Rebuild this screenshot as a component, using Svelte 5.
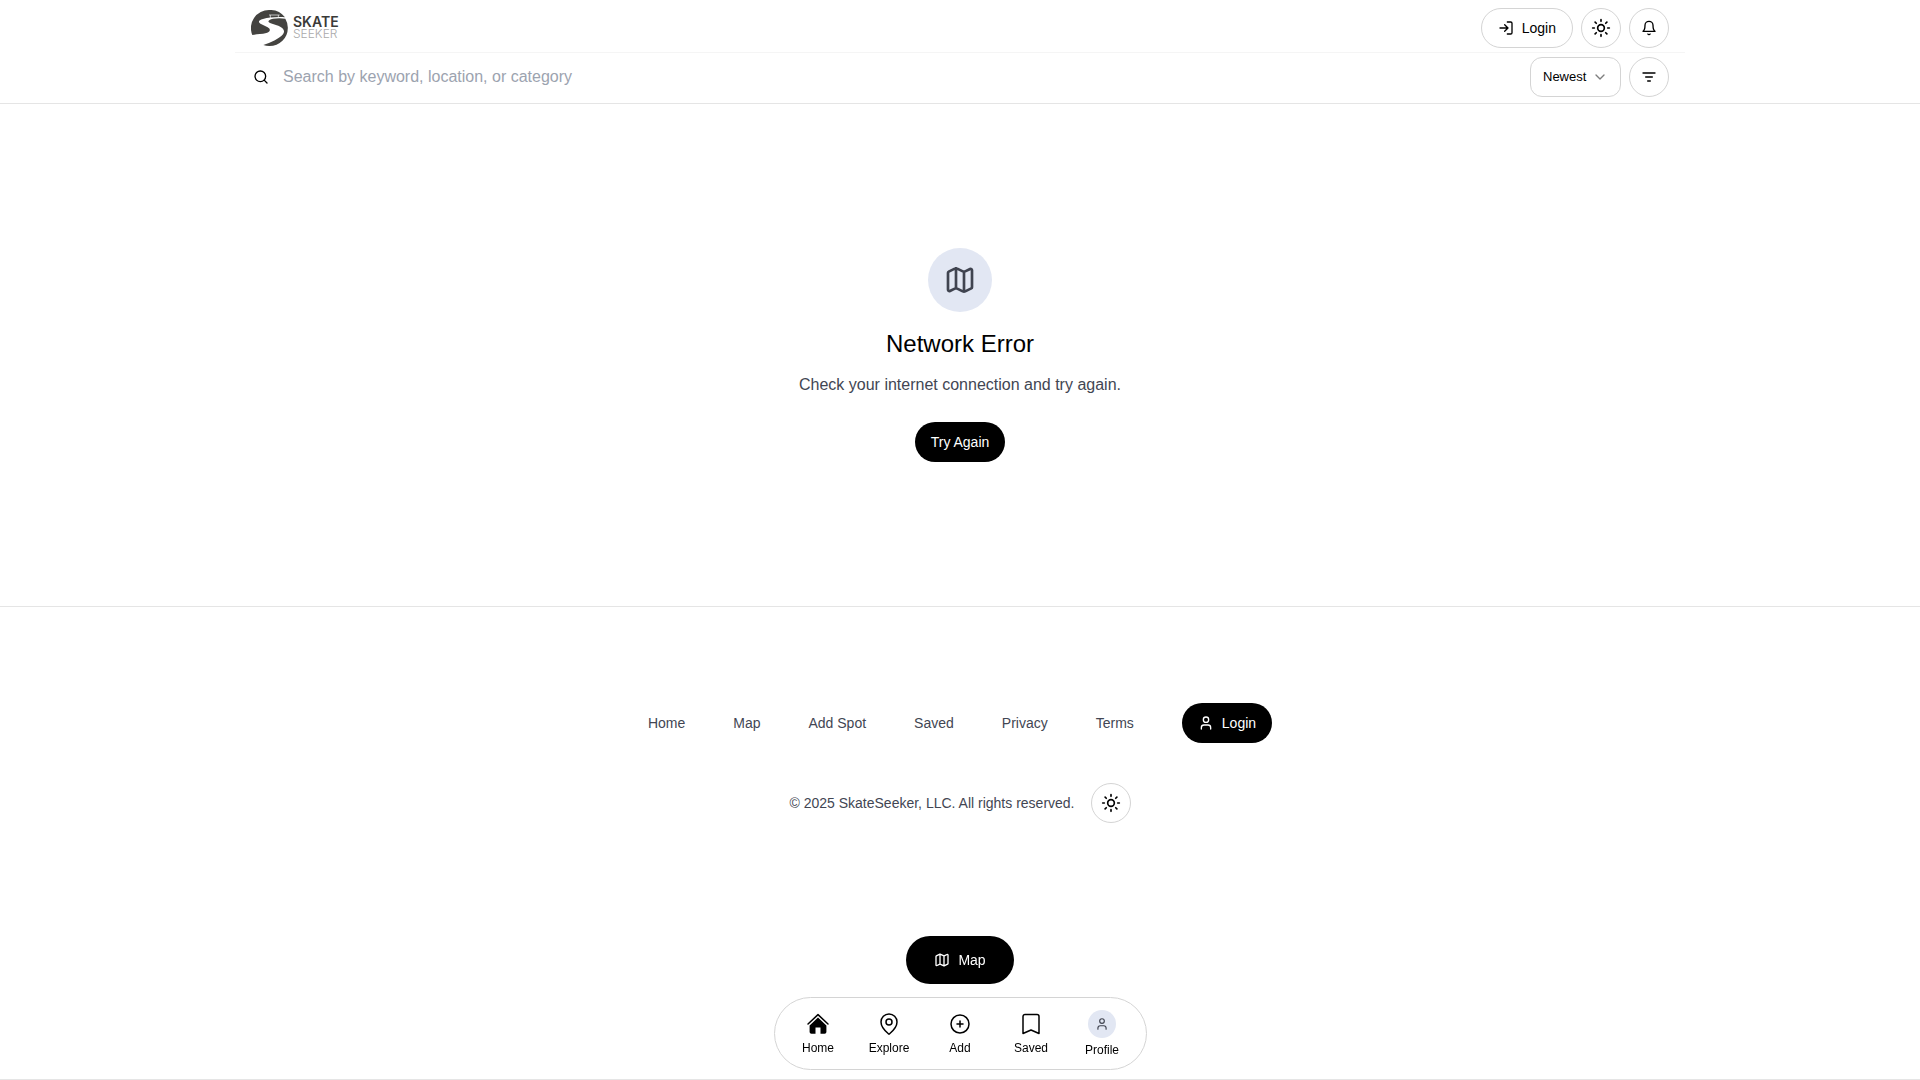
<script>
  const footerLinks = ['Home', 'Map', 'Add Spot', 'Saved', 'Privacy', 'Terms'];
  const tabs = [
    { label: 'Home', icon: 'home' },
    { label: 'Explore', icon: 'pin' },
    { label: 'Add', icon: 'plus' },
    { label: 'Saved', icon: 'bookmark' },
    { label: 'Profile', icon: 'user' }
  ];
  let query = $state('');
  let sort = $state('Newest');
</script>

{#snippet icon(name, size, weight = 2)}
  <svg
    width={size}
    height={size}
    viewBox="0 0 24 24"
    fill="none"
    stroke="currentColor"
    stroke-width={weight}
    stroke-linecap="round"
    stroke-linejoin="round"
    aria-hidden="true"
  >
    {#if name === 'login'}
      <path d="M14 3h5a2 2 0 0 1 2 2v14a2 2 0 0 1-2 2h-5M10 17l5-5-5-5M15 12H3" />
    {:else if name === 'sun'}
      <circle cx="12" cy="12" r="4" />
      <path d="M12 2v2M12 20v2M4.93 4.93l1.41 1.41M17.66 17.66l1.41 1.41M2 12h2M20 12h2M6.34 17.66l-1.41 1.41M19.07 4.93l-1.41 1.41" />
    {:else if name === 'bell'}
      <path d="M6 8a6 6 0 0 1 12 0c0 7 3 9 3 9H3s3-2 3-9M10.3 21a1.94 1.94 0 0 0 3.4 0" />
    {:else if name === 'search'}
      <circle cx="11" cy="11" r="8" />
      <path d="m21 21-4.3-4.3" />
    {:else if name === 'filter'}
      <path d="M3 6h18M7 12h10M10 18h4" />
    {:else if name === 'chevron'}
      <path d="m6 9 6 6 6-6" />
    {:else if name === 'map'}
      <path d="M14.1 5.55a2 2 0 0 0 1.8 0l3.65-1.83A1 1 0 0 1 21 4.62v12.76a1 1 0 0 1-.55.9l-4.55 2.27a2 2 0 0 1-1.8 0l-4.2-2.1a2 2 0 0 0-1.8 0l-3.65 1.83A1 1 0 0 1 3 19.38V6.62a1 1 0 0 1 .55-.9L8.1 3.45a2 2 0 0 1 1.8 0zM15 5.76v15M9 3.24v15" />
    {:else if name === 'user'}
      <circle cx="12" cy="7" r="4" />
      <path d="M19 21v-2a4 4 0 0 0-4-4H9a4 4 0 0 0-4 4v2" />
    {:else if name === 'home'}
      <path d="M2 12 12 2.6 22 12" stroke-width="1.5" />
      <path d="M12 5.6 3.6 13.4V20a1.8 1.8 0 0 0 1.8 1.8h4.1v-6.4h5v6.4h4.1a1.8 1.8 0 0 0 1.8-1.8v-6.6z" fill="currentColor" stroke="none" />
    {:else if name === 'pin'}
      <circle cx="12" cy="10" r="3" />
      <path d="M20 10c0 5-5.5 10.2-7.4 11.8a1 1 0 0 1-1.2 0C9.5 20.2 4 15 4 10a8 8 0 0 1 16 0" />
    {:else if name === 'plus'}
      <circle cx="12" cy="12" r="9" />
      <path d="M12 9v6M9 12h6" />
    {:else if name === 'bookmark'}
      <path d="M4 21.5V4.5a2 2 0 0 1 2-2h12a2 2 0 0 1 2 2v17L12 18z" />
    {/if}
  </svg>
{/snippet}

<div class="page">
  <header>
    <div class="inner top">
      <a class="logo" href="#home" aria-label="SkateSeeker home">
        <svg width="37" height="36" viewBox="0 0 111 108" aria-hidden="true">
          <path
            fill="#444340"
            d="M4 75A55 54 0 0 1 55.5 0A55 54 0 0 1 102 22C80 20 54 22 36 27C22 31 20 37 30 42L50 52C61 58 57 65 46 69C31 73 16 72 4 75Z"
          />
          <path
            fill="#444340"
            d="M103 26A55 54 0 0 1 110.5 54A55 54 0 0 1 55.5 108A55 54 0 0 1 37 105C59 98 84 87 96 73C104 62 96 52 77 46L59 40C47 35 52 29 66 26C78 24 92 24 103 26Z"
          />
          <path fill="none" stroke="#fff" stroke-width="2" d="M54 15H86M58 15V24M82 15V22" />
        </svg>
        <span class="wordmark"><b>SKATE</b><i>SEEKER</i></span>
      </a>
      <div class="actions">
        <button class="pill">{@render icon('login', 16)}Login</button>
        <button class="round" aria-label="Toggle theme">{@render icon('sun', 20)}</button>
        <button class="round" aria-label="Notifications">{@render icon('bell', 16)}</button>
      </div>
    </div>
    <div class="inner search">
      <label class="field">
        {@render icon('search', 16)}
        <input type="text" aria-label="Search" placeholder="Search by keyword, location, or category" bind:value={query} />
      </label>
      <div class="actions">
        <div class="sort">
          <select aria-label="Sort by" bind:value={sort}>
            <option>Newest</option>
            <option>Oldest</option>
          </select>
          {@render icon('chevron', 16)}
        </div>
        <button class="round" aria-label="Filters">{@render icon('filter', 16)}</button>
      </div>
    </div>
  </header>

  <main>
    <div class="badge">{@render icon('map', 32)}</div>
    <h1>Network Error</h1>
    <p>Check your internet connection and try again.</p>
    <button class="pill solid">Try Again</button>
  </main>

  <footer>
    <nav class="links" aria-label="Footer">
      {#each footerLinks as link}
        <a href="#{link}">{link}</a>
      {/each}
      <button class="pill solid">{@render icon('user', 16)}Login</button>
    </nav>
    <div class="legal">
      <span>© 2025 SkateSeeker, LLC. All rights reserved.</span>
      <button class="round" aria-label="Toggle theme">{@render icon('sun', 20)}</button>
    </div>
  </footer>
</div>

<div class="dock">
  <button class="pill solid map">{@render icon('map', 16)}Map</button>
  <nav class="tabs" aria-label="Main">
    {#each tabs as tab}
      <a href="#{tab.label}">
        {#if tab.icon === 'user'}
          <span class="avatar">{@render icon('user', 14)}</span>
        {:else}
          {@render icon(tab.icon, 24, 1.5)}
        {/if}
        {tab.label}
      </a>
    {/each}
  </nav>
</div>

<style>
  :global(body) {
    margin: 0;
    background: #fff;
    color: #000;
    font-family: 'Liberation Sans', Arial, sans-serif;
    font-size: 14px;
    line-height: 20px;
  }
  svg {
    display: block;
    flex: none;
  }
  a {
    color: inherit;
    text-decoration: none;
  }
  button,
  input,
  select {
    box-sizing: border-box;
    margin: 0;
    font: inherit;
    color: inherit;
  }
  .page {
    display: flex;
    flex-direction: column;
    min-height: 100vh;
  }
  header {
    border-bottom: 1px solid #e5e5e5;
  }
  .inner {
    box-sizing: border-box;
    display: flex;
    align-items: center;
    justify-content: space-between;
    max-width: 1450px;
    margin: 0 auto;
    padding: 0 16px;
  }
  .top {
    padding-top: 8px;
    padding-bottom: 4px;
    border-bottom: 1px solid #f5f5f5;
  }
  .search {
    padding-top: 4px;
    padding-bottom: 6px;
  }
  .logo {
    display: flex;
    align-items: center;
    gap: 5px;
  }
  .wordmark {
    display: flex;
    flex-direction: column;
    font-family: Inter, sans-serif;
    line-height: 12px;
  }
  .wordmark b {
    font-size: 14px;
    font-weight: 600;
    color: #3a3a38;
  }
  .wordmark i {
    font-size: 12px;
    font-style: normal;
    font-weight: 300;
    color: #aaa;
  }
  .actions {
    display: flex;
    gap: 8px;
  }
  .pill,
  .round {
    display: flex;
    align-items: center;
    justify-content: center;
    gap: 8px;
    height: 40px;
    padding: 0 16px;
    border: 1px solid #d4d4d4;
    border-radius: 20px;
    background: #fff;
    cursor: pointer;
  }
  .round {
    width: 40px;
    padding: 0;
  }
  .solid {
    border: 0;
    background: #000;
    color: #fff;
  }
  .field {
    display: flex;
    flex: 1;
    align-items: center;
    gap: 14px;
    padding-left: 2px;
  }
  .field input {
    flex: 1;
    padding: 0;
    border: 0;
    outline: 0;
    background: none;
    font-size: 16px;
    line-height: 24px;
  }
  .field input::placeholder {
    color: #9ca3af;
    opacity: 1;
  }
  .sort {
    display: grid;
    align-items: center;
  }
  .sort select,
  .sort :global(svg) {
    grid-area: 1 / 1;
  }
  .sort select {
    width: 91px;
    height: 40px;
    padding: 0 32px 0 12px;
    border: 1px solid #d4d4d4;
    border-radius: 12px;
    background: #fff;
    font-size: 13px;
    appearance: none;
  }
  .sort :global(svg) {
    justify-self: end;
    margin-right: 13px;
    opacity: 0.5;
    pointer-events: none;
  }
  main {
    display: flex;
    flex: 1;
    flex-direction: column;
    align-items: center;
    justify-content: center;
    padding: 48px 16px;
  }
  .badge {
    display: grid;
    place-items: center;
    width: 64px;
    height: 64px;
    border-radius: 50%;
    background: #e2e7f3;
    color: #404450;
  }
  h1 {
    margin: 16px 0 13px;
    font-size: 24px;
    font-weight: 400;
    line-height: 32px;
  }
  p {
    margin: 0 0 25px;
    font-size: 16px;
    line-height: 24px;
    color: #424653;
  }
  footer {
    display: flex;
    flex-direction: column;
    align-items: center;
    gap: 40px;
    padding: 96px 16px 256px;
    border-top: 1px solid #e5e5e5;
    border-bottom: 1px solid #e5e5e5;
    color: #424653;
  }
  .links {
    display: flex;
    align-items: center;
    gap: 48px;
  }
  .legal {
    display: flex;
    align-items: center;
    gap: 16px;
  }
  .legal .round {
    color: #000;
  }
  .dock {
    position: fixed;
    right: 0;
    bottom: 10px;
    left: 0;
    display: flex;
    flex-direction: column;
    align-items: center;
    gap: 13px;
    pointer-events: none;
  }
  .dock > * {
    pointer-events: auto;
  }
  .map {
    height: 48px;
    padding: 0 28px;
    border-radius: 24px;
  }
  .tabs {
    display: flex;
    padding: 12px 8px 11px;
    border: 1px solid #d4d4d4;
    border-radius: 37px;
    background: #fff;
  }
  .tabs a {
    display: flex;
    flex-direction: column;
    align-items: center;
    justify-content: center;
    gap: 5px;
    width: 71px;
    font-size: 12px;
    line-height: 15px;
  }
  .avatar {
    display: grid;
    place-items: center;
    width: 28px;
    height: 28px;
    border-radius: 50%;
    background: #e2e7f3;
    color: #404450;
  }
</style>
